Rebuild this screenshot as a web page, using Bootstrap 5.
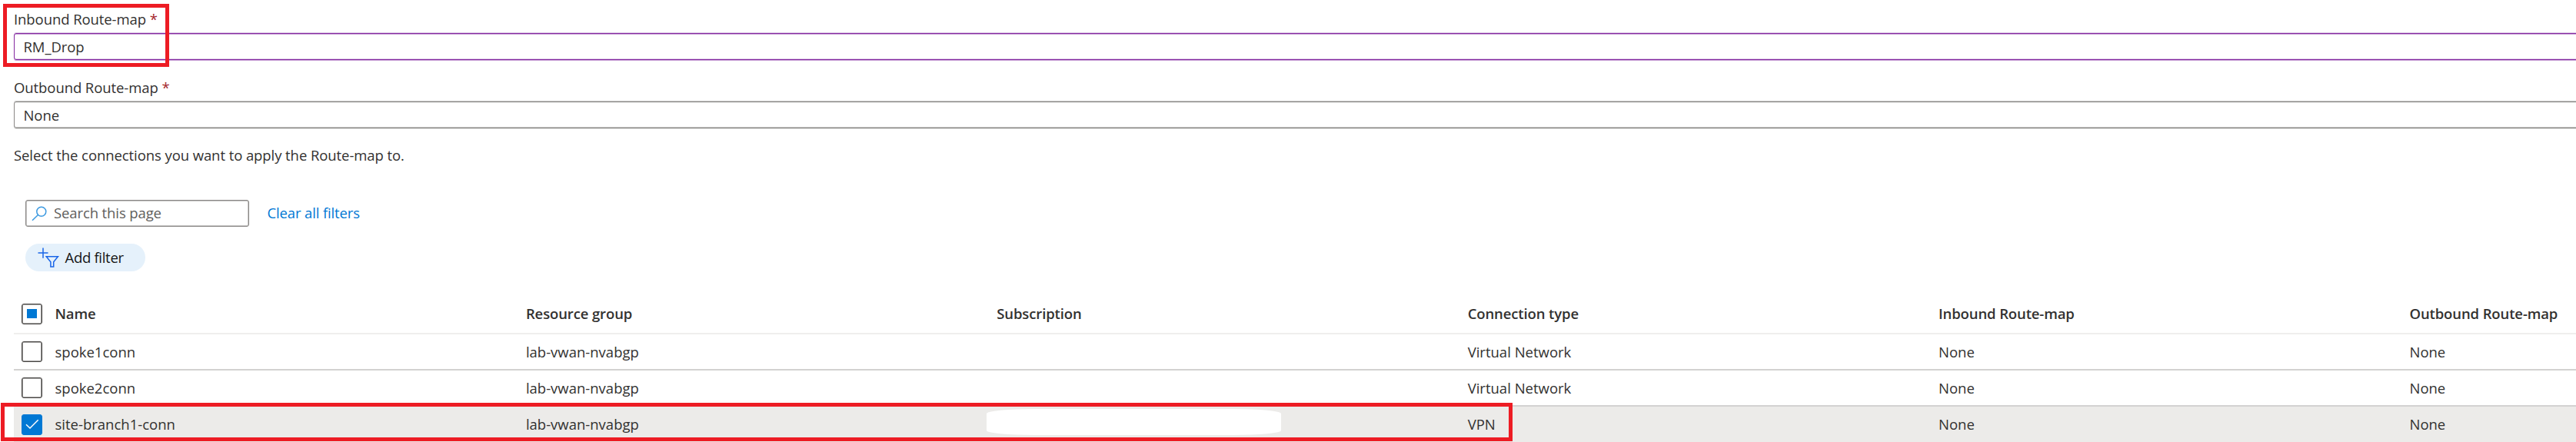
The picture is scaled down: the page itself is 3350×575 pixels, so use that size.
<!DOCTYPE html>
<html lang="en">
<head>
<meta charset="utf-8">
<title>Apply route-maps</title>
<link href="https://cdn.jsdelivr.net/npm/bootstrap@5.3.0/dist/css/bootstrap.min.css" rel="stylesheet">
<style>
body{font-family:"Open Sans","Noto Sans",sans-serif;font-size:18.5px;letter-spacing:-.08px;color:#323130;background:#fff;height:575px;overflow:hidden}
.pane{height:575px;overflow:hidden;padding:12px 0 0 18px}
.field-label{line-height:26px;height:31px;margin:0}
.req{color:#a4262c}
.combo{height:35px;width:calc(100% + 20px);line-height:33px;padding:0 11.5px;border:1px solid #8a8886;border-radius:3px;box-shadow:0 -1px 0 #c8c8c7,0 1px 0 #e4e4e3,inset 0 1px 0 #f0f0f0,inset 0 -1px 0 #c6c5c4}
.combo.active{border-color:#8429a0;box-shadow:0 -1px 0 #e3d3ea,0 1px 0 #c79fd5,inset 0 1px 0 #c79fd5,inset 0 -1px 0 #e3d3ea}
.second{margin-top:23px}
.hint{line-height:26px;margin:22px 0 0}
.tools{margin:45px 0 0 14.5px}
.search{width:291.5px;height:35px;border:1px solid #8a8886;box-shadow:inset 0 0 0 .5px #8a8886;border-radius:3px;color:#605e5c;padding-left:7.5px;letter-spacing:-.11px}
.search svg{margin-right:9px}
.search span,.clear{margin-top:-1px}
.clear{color:#0078d4;margin-left:23.5px;letter-spacing:-.14px}
.pill{width:156.5px;height:36px;border-radius:18px;background:#e5f1fb;color:#161616;margin:22px 0 0 14.5px;padding-left:16px;letter-spacing:-.3px}
.pill svg{margin-right:8px}
.grid-table{table-layout:fixed;width:3675px;margin:30px 0 0 0;border-collapse:separate;border-spacing:0;letter-spacing:0}
.grid-table th,.grid-table td{padding:0;vertical-align:middle;font-weight:400;line-height:26px;white-space:nowrap}
.grid-table th{font-weight:600;height:52px;border-bottom:2px solid #efeeed;letter-spacing:-.12px}
.grid-table td{height:47px;border-bottom:2px solid #d3d2d1}
.grid-table .picked td{background:#ecebe9;height:48px}
.grid-table .pad{padding-left:10px}
.c1{width:53.5px}.c2{width:612.4px}
.tick{width:27px;height:27px;border:1px solid #484644;box-shadow:inset 0 0 0 .6px #484644;border-radius:3px;display:flex;align-items:center;justify-content:center;background:#fff}
.tick.on{background:#0078d4;border-color:#0078d4;box-shadow:none}
.tick i{width:12.5px;height:12.5px;background:#0078d4}
.outline{border:5px solid #ed1c24}
.o1{left:4px;top:5px;width:216px;height:82px}
.o2{left:1px;top:524px;width:1966px;height:50px}
.cover{left:1282.7px;top:532px;width:383.5px;height:34px;background:#fff;border-radius:62px/6px}
</style>
</head>
<body>
<main class="pane position-relative">
  <p class="field-label">Inbound Route-map <span class="req">*</span></p>
  <div class="combo active">RM_Drop</div>
  <p class="field-label second">Outbound Route-map <span class="req">*</span></p>
  <div class="combo">None</div>
  <p class="hint">Select the connections you want to apply the Route-map to.</p>
  <div class="tools d-flex align-items-center">
    <div class="search d-flex align-items-center">
      <svg width="20" height="20" viewBox="0 0 20 20" fill="none" stroke="#3b99e0" stroke-width="1.5"><circle cx="12.8" cy="7.2" r="6"/><path d="M8.5 11.5 1 18.8"/></svg>
      <span>Search this page</span>
    </div>
    <a class="clear text-decoration-none" href="#">Clear all filters</a>
  </div>
  <div class="pill d-flex align-items-center">
    <svg width="28" height="26" viewBox="0 0 28 26" fill="none" stroke="#1a66e8" stroke-width="1.5"><path d="M.5 7h13M7 .5v13.3M11.2 11.8h15.2l-5.7 7v6.2h-3.8v-6.2z"/></svg>
    <span>Add filter</span>
  </div>
  <table class="grid-table">
    <colgroup><col class="c1"><col class="c2"><col class="c2"><col class="c2"><col class="c2"><col class="c2"><col class="c2"></colgroup>
    <thead>
      <tr><th class="pad"><span class="tick"><i></i></span></th><th>Name</th><th>Resource group</th><th>Subscription</th><th>Connection type</th><th>Inbound Route-map</th><th>Outbound Route-map</th></tr>
    </thead>
    <tbody>
      <tr><td class="pad"><span class="tick"></span></td><td>spoke1conn</td><td>lab-vwan-nvabgp</td><td></td><td>Virtual Network</td><td>None</td><td>None</td></tr>
      <tr><td class="pad"><span class="tick"></span></td><td>spoke2conn</td><td>lab-vwan-nvabgp</td><td></td><td>Virtual Network</td><td>None</td><td>None</td></tr>
      <tr class="picked"><td class="pad"><span class="tick on"><svg width="18" height="14" viewBox="0 0 18 14" fill="none" stroke="#fff" stroke-width="1.5"><path d="M1 7.2 6 12 16.7 1.3"/></svg></span></td><td>site-branch1-conn</td><td>lab-vwan-nvabgp</td><td></td><td>VPN</td><td>None</td><td>None</td></tr>
    </tbody>
  </table>
  <div class="cover position-absolute"></div>
  <div class="outline o1 position-absolute"></div>
  <div class="outline o2 position-absolute"></div>
</main>
<script src="https://cdn.jsdelivr.net/npm/bootstrap@5.3.0/dist/js/bootstrap.bundle.min.js"></script>
</body>
</html>
